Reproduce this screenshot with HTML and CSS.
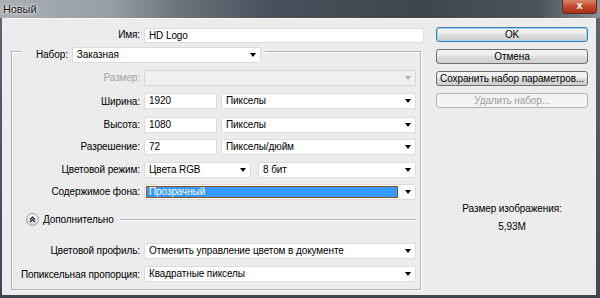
FILE: index.html
```html
<!DOCTYPE html>
<html lang="ru">
<head>
  <meta charset="UTF-8">
  <title>Новый</title>
  <link rel="stylesheet" href="styles.css">
</head>
<body>
  <div class="window">
    <div class="titlebar">
      <span class="title">Новый</span>
      <span class="close">x</span>
    </div>

    <div class="dialog">
      <div class="main">
        <div class="name-row">
          <label class="label">Имя:</label>
          <div class="field">HD Logo</div>
        </div>

        <fieldset class="preset">
          <legend class="preset-legend">
            <label class="label">Набор:</label>
            <div class="select preset-select"><span class="select-text">Заказная</span><span class="arrow"></span></div>
          </legend>

          <div class="rows">
            <label class="label disabled">Размер:</label>
            <div class="select is-disabled"><span class="select-text"></span><span class="arrow"></span></div>

            <label class="label">Ширина:</label>
            <div class="pair">
              <div class="field num">1920</div>
              <div class="select"><span class="select-text">Пикселы</span><span class="arrow"></span></div>
            </div>

            <label class="label">Высота:</label>
            <div class="pair">
              <div class="field num">1080</div>
              <div class="select"><span class="select-text">Пикселы</span><span class="arrow"></span></div>
            </div>

            <label class="label">Разрешение:</label>
            <div class="pair">
              <div class="field num">72</div>
              <div class="select"><span class="select-text">Пикселы/дюйм</span><span class="arrow"></span></div>
            </div>

            <label class="label">Цветовой режим:</label>
            <div class="pair mode">
              <div class="select"><span class="select-text">Цвета RGB</span><span class="arrow"></span></div>
              <div class="select"><span class="select-text">8 бит</span><span class="arrow"></span></div>
            </div>

            <label class="label">Содержимое фона:</label>
            <div class="select focused"><span class="select-text"><span class="highlight">Прозрачный</span></span><span class="arrow"></span></div>
          </div>

          <div class="advanced">
            <span class="toggle">
              <svg width="13" height="13" viewBox="0 0 13 13">
                <defs>
                  <linearGradient id="tg" x1="0" y1="0" x2="0" y2="1">
                    <stop offset="0" stop-color="#ffffff"/>
                    <stop offset="1" stop-color="#d4d4d4"/>
                  </linearGradient>
                </defs>
                <circle cx="6.5" cy="6.5" r="6" fill="url(#tg)" stroke="#9a9a9a"/>
                <path d="M4 6.5 L6.5 4 L9 6.5 M4 9 L6.5 6.5 L9 9" fill="none" stroke="#222" stroke-width="1.2"/>
              </svg>
            </span>
            <span class="advanced-text">Дополнительно</span>
            <span class="advanced-line"></span>
          </div>

          <div class="rows extra">
            <label class="label">Цветовой профиль:</label>
            <div class="select"><span class="select-text">Отменить управление цветом в документе</span><span class="arrow"></span></div>

            <label class="label">Попиксельная пропорция:</label>
            <div class="select"><span class="select-text">Квадратные пикселы</span><span class="arrow"></span></div>
          </div>
        </fieldset>
      </div>

      <aside class="side">
        <button class="btn btn-default">OK</button>
        <button class="btn">Отмена</button>
        <button class="btn">Сохранить набор параметров...</button>
        <button class="btn" disabled>Удалить набор...</button>

        <div class="size-info">
          <div>Размер изображения:</div>
          <div class="size-value">5,93M</div>
        </div>
      </aside>
    </div>
  </div>
</body>
</html>
```

FILE: styles.css
```css
* {
  margin: 0;
  padding: 0;
  box-sizing: border-box;
}

body {
  font-family: 'Liberation Sans', Arial, sans-serif;
  font-size: 10px;
  letter-spacing: -0.1px;
  color: #000;
  background: #3c444d;
}

.window {
  width: 600px;
  height: 298px;
  display: flex;
  flex-direction: column;
  background: linear-gradient(to bottom, #5d6770, #3f4750);
}

/* title bar */
.titlebar {
  height: 18px;
  display: flex;
  align-items: flex-start;
  justify-content: space-between;
  background: linear-gradient(to right, #a9afb4 0%, #979ea4 18%, #6a737c 30%, #48515b 45%, #3d454e 70%, #4b545c 90%, #8a9198 100%);
}

.title {
  padding: 3px 0 0 3px;
  font-size: 11px;
  color: #111;
  text-shadow: 0 0 4px #fff, 0 0 2px #fff;
}

.close {
  width: 35px;
  height: 14px;
  margin-right: 3px;
  border: 1px solid #5a2a1c;
  border-top: none;
  border-radius: 0 0 4px 4px;
  background: linear-gradient(to bottom, #d9836a, #c24a2c 50%, #a8301a);
  color: #fff;
  font-weight: bold;
  font-size: 11px;
  line-height: 11px;
  text-align: center;
}

/* dialog body */
.dialog {
  flex: 1;
  display: flex;
  margin: 0 4px 3px 2px;
  background: #ececec;
  border-top: 1px solid #f8f8f8;
}

.main {
  width: 422px;
  padding-top: 8px;
}

.label {
  text-align: right;
  white-space: nowrap;
  line-height: 16px;
}

.label.disabled {
  color: #a3a3a3;
}

.name-row {
  display: grid;
  grid-template-columns: 138px 1fr;
  column-gap: 4px;
  align-items: center;
}

.field,
.select {
  height: 16px;
  background: #fff;
  border: 1px solid #dcdcdc;
  border-radius: 2px;
  padding: 0 4px;
  line-height: 14px;
  white-space: nowrap;
}

.name-row .field {
  height: 15px;
}

.select {
  display: flex;
  align-items: center;
  padding-right: 4px;
}

.select-text {
  flex: 1;
  overflow: hidden;
}

.arrow {
  width: 0;
  height: 0;
  border-left: 3.5px solid transparent;
  border-right: 3.5px solid transparent;
  border-top: 4px solid #000;
}

.select.is-disabled {
  background: #f0f0f0;
  border-color: #d6d6d6;
}

.select.is-disabled .arrow {
  border-top-color: #b0b0b0;
}

/* preset group */
.preset {
  margin: -4px 0 0 9px;
  width: 410px;
  border: 1px solid #b3b3b3;
  box-shadow: inset 1px 1px 0 #fff, 1px 1px 0 #fff;
  padding: 0 4px 6px 0;
}

.preset-legend {
  display: flex;
  align-items: center;
  gap: 4px;
  margin-left: 9px;
  padding: 8px 4px 0 15px;
  background: #ececec;
}

.preset-select {
  width: 189px;
}

.rows {
  display: grid;
  grid-template-columns: 128px 1fr;
  column-gap: 4px;
  row-gap: 6.5px;
  margin-top: 7px;
}

.rows > .label:nth-of-type(2) {
  margin-top: 1.5px;
}

.pair {
  display: grid;
  grid-template-columns: 73px 1fr;
  gap: 4px;
}

.pair.mode {
  grid-template-columns: 107px 1fr;
  gap: 7px;
}

.select.focused {
  padding-left: 1px;
}

.highlight {
  display: block;
  margin-right: 7px;
  height: 12px;
  line-height: 10px;
  padding-left: 2px;
  background: #3399ff;
  border: 1px solid #8a5526;
  color: #fff;
}

/* advanced toggle */
.advanced {
  display: flex;
  align-items: center;
  gap: 4px;
  margin: 13px 0 0 14px;
  height: 13px;
}

.toggle {
  display: flex;
}

.advanced-line {
  flex: 1;
  height: 2px;
  margin: 0 0 0 2px;
  border-top: 1px solid #b8b8b8;
  border-bottom: 1px solid #fff;
}

.rows.extra {
  margin-top: 17px;
}

/* right column */
.side {
  width: 152px;
  margin-left: 12px;
  padding-top: 8px;
  display: flex;
  flex-direction: column;
  gap: 7px;
}

.btn {
  height: 15px;
  font-family: inherit;
  font-size: 10px;
  letter-spacing: -0.1px;
  line-height: 13px;
  white-space: nowrap;
  border: 1px solid #707070;
  border-radius: 3px;
  background: linear-gradient(to bottom, #f4f4f4 0%, #ebebeb 45%, #dddddd 50%, #cfcfcf 100%);
  color: #000;
}

.btn-default {
  border-color: #3c7fb1;
  box-shadow: inset 0 0 0 1px #9fd3f5;
}

.btn:disabled {
  border-color: #adb2b5;
  background: #f4f4f4;
  color: #a0a0a0;
}

.size-info {
  margin-top: 87px;
  text-align: center;
  line-height: 13px;
}

.size-value {
  margin-top: 5px;
}
```
